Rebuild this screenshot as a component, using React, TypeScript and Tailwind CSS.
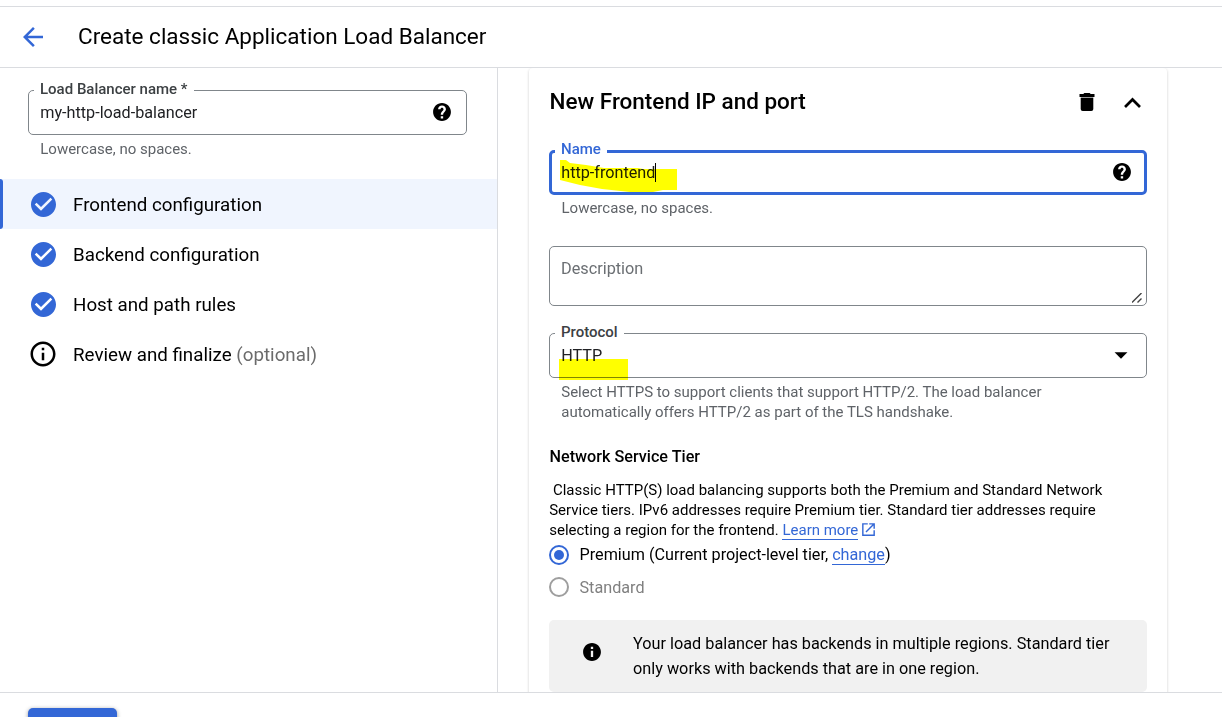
import type { ReactNode } from "react";

function Icon({ d, size, className = "" }: { d: string; size: number; className?: string }) {
  return (
    <svg viewBox="0 0 24 24" width={size} height={size} fill="currentColor" className={`block shrink-0 ${className}`}>
      <path d={d} />
    </svg>
  );
}

const paths = {
  back: "M20 11H7.83l5.59-5.59L12 4l-8 8 8 8 1.41-1.41L7.83 13H20v-2z",
  help: "M12 2C6.48 2 2 6.48 2 12s4.48 10 10 10 10-4.48 10-10S17.52 2 12 2zm1.3 17.3h-2.7v-2.5h2.7v2.5zm2.2-8.1-.9.95c-.75.75-1.3 1.35-1.3 2.85h-2.7v-.5c0-1.1.45-2.1 1.2-2.85l1.3-1.25c.4-.35.6-.85.6-1.4 0-1-.7-1.7-1.7-1.7s-1.7.7-1.7 1.7H7.6c0-2.4 2-4.3 4.4-4.3s4.4 1.9 4.4 4.3c0 .85-.35 1.65-.9 2.2z",
  check: "M12 2C6.48 2 2 6.48 2 12s4.48 10 10 10 10-4.48 10-10S17.52 2 12 2zm-2 15l-5-5 1.41-1.41L10 14.17l7.59-7.59L19 8l-9 9z",
  infoOutline: "M11 17h2v-6h-2v6zm1-15C6.48 2 2 6.48 2 12s4.48 10 10 10 10-4.48 10-10S17.52 2 12 2zm0 18c-4.41 0-8-3.59-8-8s3.59-8 8-8 8 3.59 8 8-3.59 8-8 8zM11 9h2V7h-2v2z",
  info: "M12 2C6.48 2 2 6.48 2 12s4.48 10 10 10 10-4.48 10-10S17.52 2 12 2zm1.3 15.5h-2.6v-7h2.6v7zm0-8.8h-2.6V6.2h2.6v2.5z",
  up: "M12 7.5l-7.5 7.6 1.7 1.7L12 11l5.800 5.800 1.700-1.700z",
  down: "M5 9l7 7 7-7z",
  external: "M19 19H5V5h6V3H3v18h18v-8h-2v6zM13 3v2h4.590l-9.830 9.830 1.410 1.410L19 6.410V11h2V3h-8z",
};

function Label({ children, className = "" }: { children: ReactNode; className?: string }) {
  return (
    <span className={`absolute bg-white px-[6px] text-[15px] leading-5 font-medium whitespace-nowrap ${className}`}>
      {children}
    </span>
  );
}

function Step({ label, active, optional }: { label: string; active?: boolean; optional?: boolean }) {
  return (
    <li className={`relative flex h-[50px] items-center gap-[15px] pl-[28px] ${active ? "bg-[#f0f5fe]" : ""}`}>
      {active && <span className="absolute inset-y-0 left-0 w-[3px] rounded-r-sm bg-[#3367d6]" />}
      <svg viewBox="0 0 30 30" width="30" height="30" className={`block ${optional ? "text-black" : "text-[#3367d6]"}`} fill="currentColor">
        <path transform={optional ? "scale(1.25)" : "translate(0.5 0.4) scale(1.25)"} d={optional ? paths.infoOutline : paths.check} />
      </svg>
      <span className="pt-[2px] text-[18.75px] leading-6 whitespace-pre text-black">
        {label}
        {optional && <span className="text-[#6b6b6b]"> (optional)</span>}
      </span>
    </li>
  );
}

export default function App() {
  return (
    <div className="flex h-[717px] w-[1222px] flex-col overflow-hidden bg-white font-[Roboto,sans-serif] text-black">
      <header className="mt-[6px] flex h-[62px] shrink-0 items-center gap-[30px] border-y border-[#dadce0] pl-[18px]">
        <Icon d={paths.back} size={30} className="text-[#3367d6]" />
        <h1 className="pb-[2px] text-[22.5px] leading-7 font-normal">Create classic Application Load Balancer</h1>
      </header>

      <main className="flex min-h-0 flex-1 overflow-hidden">
        <aside className="w-[498px] shrink-0 border-r border-[#dadce0] pt-[22px]">
          <div className="relative ml-[28px] flex h-[45px] w-[439px] items-center justify-between rounded-[5px] border border-[#80868b] pr-[13px] pl-[11.25px]">
            <Label className="top-[-12px] left-[5px] text-[#3c4043]">Load Balancer name *</Label>
            <span className="text-[16.2px] leading-5 text-[#202124]">my-http-load-balancer</span>
            <Icon d={paths.help} size={22} className="mb-px p-[0.3px]" />
          </div>
          <p className="mt-[4px] ml-[40.25px] text-[15px] leading-5 text-[#5f6368]">Lowercase, no spaces.</p>
          <ul className="mt-[20px]">
            <Step label="Frontend configuration" active />
            <Step label="Backend configuration" />
            <Step label="Host and path rules" />
            <Step label="Review and finalize" optional />
          </ul>
        </aside>

        <section className="ml-[31px] h-[680px] w-[638px] shrink-0 rounded-t-[4px] px-[20px] pt-[19px] shadow-[0_1px_3px_rgba(0,0,0,0.2)]">
          <div className="flex h-[29px] items-center">
            <h2 className="flex-1 pb-[2px] pl-[0.5px] text-[22.5px] leading-7 font-medium">New Frontend IP and port</h2>
            <svg viewBox="0 0 16 18" width="16" height="18" className="mr-[24px] block">
              <path d="M5.3 0h5.4l1 1h3.800v3H.5V1h3.800z" />
              <path d="M1.700 4h12.600v1H1.700z" fill="#999" />
              <path d="M1.700 5h12.600v11a2 2 0 0 1-2 2H3.700a2 2 0 0 1-2-2z" />
            </svg>
            <Icon d={paths.up} size={27} className="mt-px mr-[1px]" />
          </div>

          <div className="relative mt-[34px] flex h-[45px] items-center justify-between rounded-[5px] border-[3px] border-[#3367d6] pr-[11px] pl-[9.25px]">
            <Label className="top-[-14px] left-[3px] text-[#3367d6]">Name</Label>
            <svg className="absolute top-[7px] left-[8px] mix-blend-multiply" width="118" height="33" fill="#ffff00">
              <path d="M0 0h6l4 3 16 2 18 3h34l5 1h34v21h-14l-10 2H70l-28-3-22-4-12-3-8-2z" />
            </svg>
            <span className="flex items-center text-[16.2px] leading-5 text-[#202124]">
              http-frontend
              <i className="-ml-[0.5px] h-[19px] w-px bg-black" />
            </span>
            <Icon d={paths.help} size={22} className="mb-px p-[0.3px]" />
          </div>
          <p className="mt-[3px] ml-[12.5px] text-[15px] leading-5 text-[#5f6368]">Lowercase, no spaces.</p>

          <div className="mt-[28px] flex h-[60px] items-end justify-between rounded-[5px] border border-[#80868b] pl-[11px]">
            <span className="self-start pt-[12px] text-[16.25px] leading-5 text-[#6b6f73]">Description</span>
            <svg width="10" height="10" className="mr-[4px] mb-[2px]" stroke="#444" strokeWidth="1.4">
              <path d="M0 9.5L9.5 0M5.500 9.500l4-4" />
            </svg>
          </div>

          <div className="relative mt-[27px] flex h-[45px] items-center justify-between rounded-[5px] border border-[#80868b] pr-[14px] pl-[11.25px]">
            <Label className="top-[-12px] left-[5px] text-[#3c4043]">Protocol</Label>
            <span className="text-[16.2px] leading-5 text-[#202124]">HTTP</span>
            <Icon d={paths.down} size={22} className="mb-[2px]" />
            <span className="absolute top-[25px] left-[9px] h-[21px] w-[69px] bg-[#ffff00] mix-blend-multiply" />
          </div>
          <p className="mt-[4px] ml-[12.25px] text-[15px] leading-5 text-[#5f6368]">
            Select HTTPS to support clients that support HTTP/2. The load balancer
            <br />
            automatically offers HTTP/2 as part of the TLS handshake.
          </p>

          <h3 className="mt-[25px] pl-[0.5px] text-[16.2px] leading-5 font-medium">Network Service Tier</h3>
          <p className="mt-[13px] pl-[0.2px] text-[15px] leading-5 whitespace-pre">
            {" "}Classic HTTP(S) load balancing supports both the Premium and Standard Network
            <br />
            Service tiers. IPv6 addresses require Premium tier. Standard tier addresses require
            <br />
            selecting a region for the frontend.{" "}
            <a className="border-b border-[#3367d6] text-[#3367d6]">Learn more</a>
            <Icon d={paths.external} size={17} className="ml-[2px] inline-block! align-[-3px] text-[#3367d6]" />
          </p>

          <div className="mt-[5px] flex h-[20px] items-center gap-[10.5px]">
            <span className="flex size-[20px] items-center justify-center rounded-full border-2 border-[#3367d6]">
              <span className="size-[10px] rounded-full bg-[#3367d6]" />
            </span>
            <span className="text-[16.22px] leading-5">
              Premium (Current project-level tier, <a className="border-b border-[#3367d6] text-[#3367d6]">change</a>)
            </span>
          </div>
          <div className="mt-[12px] flex h-[20px] items-center gap-[10.5px]">
            <span className="size-[20px] rounded-full border-2 border-[#9e9e9e]" />
            <span className="pt-[2px] text-[16.2px] leading-5 text-[#808080]">Standard</span>
          </div>

          <div className="mt-[23px] flex h-[72px] items-start rounded-[5px] bg-[#f1f1f1] pl-[32px]">
            <Icon d={paths.info} size={22} className="mt-[21px] p-[0.3px]" />
            <p className="mt-[11px] ml-[30px] text-[16.25px] leading-[25px] whitespace-nowrap">
              Your load balancer has backends in multiple regions. Standard tier
              <br />
              only works with backends that are in one region.
            </p>
          </div>
        </section>
      </main>

      <footer className="h-[25px] shrink-0 overflow-hidden border-t border-[#dadce0] bg-white pt-[15px] pl-[28px]">
        <div className="h-[45px] w-[89px] rounded-[5px] bg-[#3367d6] shadow-[0_1px_4px_rgba(0,0,0,0.4)]" />
      </footer>
    </div>
  );
}
